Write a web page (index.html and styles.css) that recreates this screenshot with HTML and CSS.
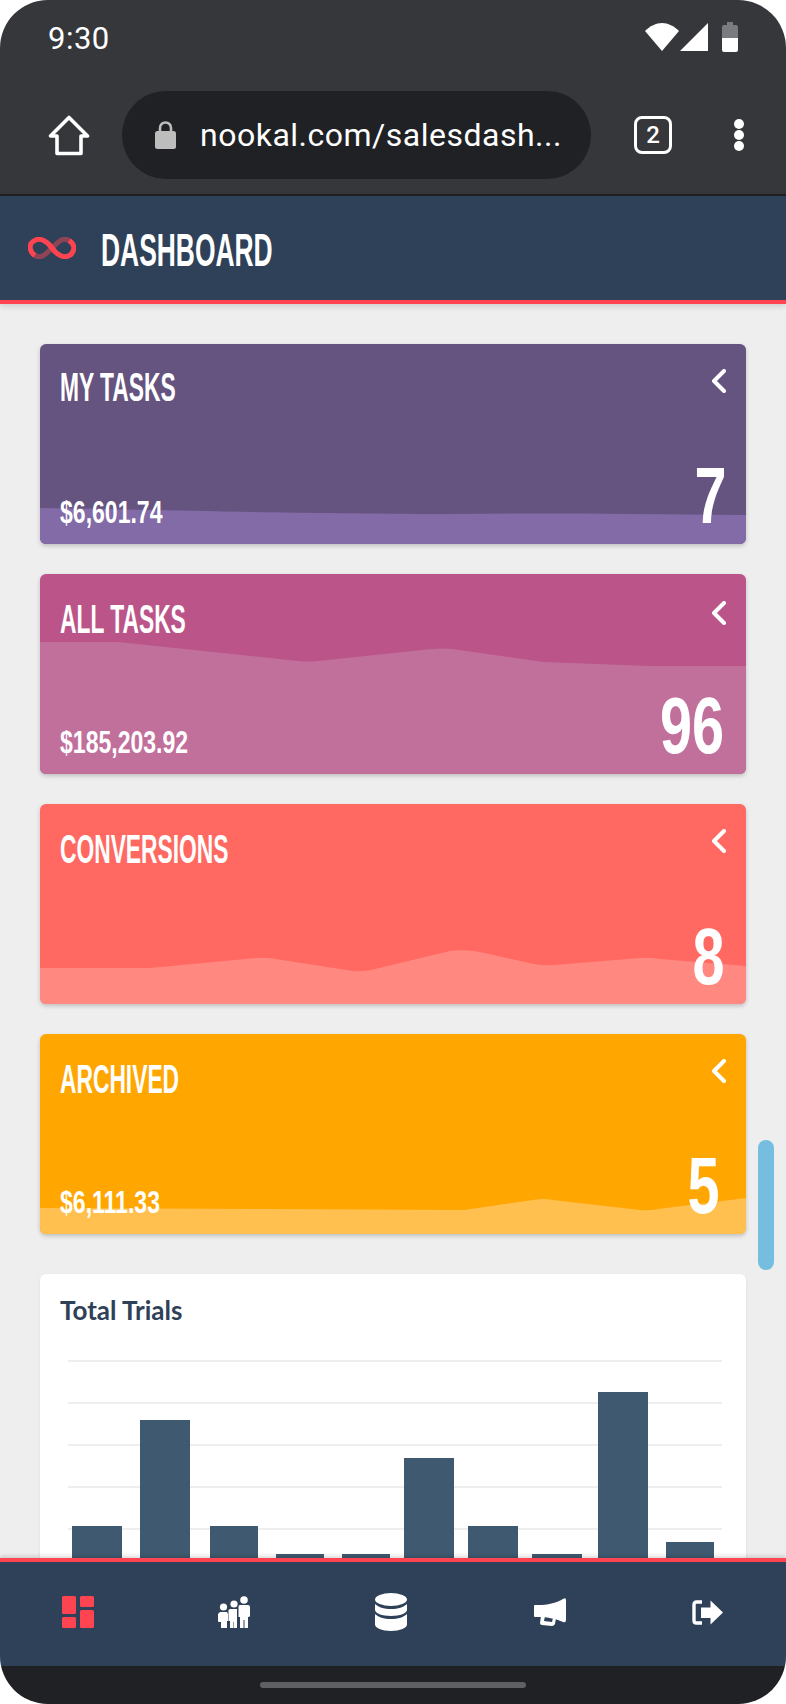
FILE: index.html
```html
<!DOCTYPE html>
<html lang="en">
<head>
    <meta charset="UTF-8">
    <meta name="viewport" content="width=device-width, initial-scale=1.0">
    <title>Dashboard</title>
    <link rel="stylesheet" href="styles.css">
</head>
<body>

<div class="phone">
    <div class="browser">
        <div class="status-bar">
            <span class="clock">9:30</span>
            <div class="status-icons">
                <svg width="34" height="28" viewBox="0 0 34 28"><path d="M0 8 C5 3 11 0 17 0 C23 0 29 3 34 8 L17 28 Z" fill="#fff"/></svg>
                <svg width="28" height="28" viewBox="0 0 28 28"><path d="M28 0 V28 H0 Z" fill="#fff"/></svg>
                <svg class="battery" width="16" height="30" viewBox="0 0 16 30"><path d="M5 0 H11 V3 H14 Q16 3 16 5 V16 H0 V5 Q0 3 2 3 H5 Z" fill="#7a7b7e"/><path d="M0 16 H16 V28 Q16 30 14 30 H2 Q0 30 0 28 Z" fill="#fff"/></svg>
            </div>
        </div>
        <div class="toolbar">
            <svg class="home-icon" width="42" height="41" viewBox="0 0 42 41"><path d="M21 2.5 L39.5 21 H33 V38.5 H9 V21 H2.5 Z" fill="none" stroke="#fff" stroke-width="3.6" stroke-linejoin="round"/></svg>
            <div class="url-pill">
                <svg width="21" height="28" viewBox="0 0 21 28"><path d="M5 12 V7 C5 3.5 7.5 1.5 10.5 1.5 C13.5 1.5 16 3.5 16 7 V12" fill="none" stroke="#bdbdbd" stroke-width="2.6"/><rect y="10" width="21" height="18" rx="2.5" fill="#bdbdbd"/></svg>
                <span class="url-text">nookal.com/salesdash...</span>
            </div>
            <div class="tab-count">2</div>
            <div class="kebab"><i></i><i></i><i></i></div>
        </div>
    </div>

    <header class="app-header">
        <svg width="48" height="22" viewBox="0 0 48 22">
            <path d="M7 18.5 C15 23 20 14 24 11 C28 8 33 -1 41 3.5" fill="none" stroke="#8e4455" stroke-width="5"/>
            <path d="M7 18.5 C1 15 1 7 5 4.5 C12 -1 20 5 24 11 C28 17 36 23 43 17.5 C47 13 47 7 41 3.5" fill="none" stroke="#ff4451" stroke-width="5"/>
        </svg>
        <h1>Dashboard</h1>
    </header>

    <main class="content">
        <section class="stat-card card-purple">
            <svg class="wave" viewBox="0 0 706 200" preserveAspectRatio="none"><path d="M0 164 C100 165 200 169 407 170 C500 169 600 170 706 171 V200 H0 Z"/></svg>
            <div class="card-top first-top">
                <h2>My Tasks</h2>
                <svg class="chevron" width="15" height="24" viewBox="0 0 15 24"><path d="M13 2 L3 12 L13 22" fill="none" stroke="#fff" stroke-width="4" stroke-linecap="round" stroke-linejoin="round"/></svg>
            </div>
            <div class="card-bottom">
                <span class="amount">$6,601.74</span>
                <span class="count count-seven">7</span>
            </div>
        </section>

        <section class="stat-card card-pink">
            <svg class="wave" viewBox="0 0 706 200" preserveAspectRatio="none"><path d="M0 68 H78 L258 87 Q268 88 278 87 L392 75 Q402 74 412 75 L504 88 L610 92 H706 V200 H0 Z"/></svg>
            <div class="card-top">
                <h2>All Tasks</h2>
                <svg class="chevron" width="15" height="24" viewBox="0 0 15 24"><path d="M13 2 L3 12 L13 22" fill="none" stroke="#fff" stroke-width="4" stroke-linecap="round" stroke-linejoin="round"/></svg>
            </div>
            <div class="card-bottom">
                <span class="amount">$185,203.92</span>
                <span class="count">96</span>
            </div>
        </section>

        <section class="stat-card card-coral">
            <svg class="wave" viewBox="0 0 706 200" preserveAspectRatio="none"><path d="M0 164 H110 L216 154 Q226 153 236 155 L313 167 Q323 168 335 165 L410 147 Q425 145 440 148 L494 160 Q504 162 514 161 L600 154 Q610 153 620 155 L706 162 V200 H0 Z"/></svg>
            <div class="card-top">
                <h2>Conversions</h2>
                <svg class="chevron chevron-high" width="15" height="24" viewBox="0 0 15 24"><path d="M13 2 L3 12 L13 22" fill="none" stroke="#fff" stroke-width="4" stroke-linecap="round" stroke-linejoin="round"/></svg>
            </div>
            <div class="card-bottom">
                <span class="count">8</span>
            </div>
        </section>

        <section class="stat-card card-orange">
            <svg class="wave" viewBox="0 0 706 200" preserveAspectRatio="none"><path d="M0 174 L231 175 L424 176 L493 166 Q503 164 513 166 L600 176 Q609 177 618 175 L706 164 V200 H0 Z"/></svg>
            <div class="card-top">
                <h2>Archived</h2>
                <svg class="chevron chevron-high" width="15" height="24" viewBox="0 0 15 24"><path d="M13 2 L3 12 L13 22" fill="none" stroke="#fff" stroke-width="4" stroke-linecap="round" stroke-linejoin="round"/></svg>
            </div>
            <div class="card-bottom">
                <span class="amount">$6,111.33</span>
                <span class="count count-five">5</span>
            </div>
        </section>

        <section class="chart-card">
            <h3>Total Trials</h3>
            <svg class="chart" width="706" height="300" viewBox="0 0 706 300">
                <g fill="#eeeeee">
                    <rect x="28" y="36" width="654" height="2"/>
                    <rect x="28" y="78" width="654" height="2"/>
                    <rect x="28" y="120" width="654" height="2"/>
                    <rect x="28" y="162" width="654" height="2"/>
                    <rect x="28" y="204" width="654" height="2"/>
                </g>
                <g fill="#3f5a70">
                    <rect x="32" y="202" width="50" height="98"/>
                    <rect x="100" y="96" width="50" height="204"/>
                    <rect x="170" y="202" width="48" height="98"/>
                    <rect x="236" y="230" width="48" height="70"/>
                    <rect x="302" y="230" width="48" height="70"/>
                    <rect x="364" y="134" width="50" height="166"/>
                    <rect x="428" y="202" width="50" height="98"/>
                    <rect x="492" y="230" width="50" height="70"/>
                    <rect x="558" y="68" width="50" height="232"/>
                    <rect x="626" y="218" width="48" height="82"/>
                </g>
            </svg>
        </section>
        <div class="scroll-thumb"></div>
    </main>

    <nav class="bottom-nav">
        <svg width="32" height="32" viewBox="0 0 32 32" fill="#ff4451"><rect width="14" height="18" rx="1.5"/><rect x="18" width="14" height="11" rx="1.5"/><rect y="21" width="14" height="11" rx="1.5"/><rect x="18" y="14" width="14" height="18" rx="1.5"/></svg>
        <svg width="32" height="32" viewBox="0 0 32 32" fill="#fff">
            <circle cx="5.5" cy="11" r="3.6"/><circle cx="16" cy="8" r="3.6"/><circle cx="26" cy="4" r="3.8"/>
            <path d="M2 16 H9 L10 18 V25 H9 V32 H3 V26 H1 Q0 26 0 25 V18 Z"/>
            <path d="M12 13 H19 V32 H16 V26 H15.5 V32 H12 V25 H10.5 V14 Z"/>
            <path d="M22 9 H30 Q32 9 32 11 V20 Q32 21 30 21 V32 H26.5 V24 H25.5 V32 H22 V21 H20.5 V11 Q20.5 9 22 9 Z"/>
        </svg>
        <svg width="32" height="38" viewBox="0 0 32 38" fill="#fff">
            <ellipse cx="16" cy="6.5" rx="16" ry="6.5"/>
            <path d="M0 11 C3 14 9 16 16 16 C23 16 29 14 32 11 V17 C32 20 25 23 16 23 C7 23 0 20 0 17 Z"/>
            <path d="M0 21 C3 24 9 26 16 26 C23 26 29 24 32 21 V31.5 C32 35 25 38 16 38 C7 38 0 35 0 31.5 Z"/>
        </svg>
        <svg width="32" height="28" viewBox="0 0 32 28" fill="#fff">
            <path d="M0 8 Q0 7 1 7 H5 C13 7 22 5 29 1 Q32 -1 32 2 V22 Q32 25 29 24 C23 21 13 19 5 19 H1 Q0 19 0 18 Z"/>
            <path d="M7 18 L6 25 Q6 27 8 27 L18 28 Q20 28 21 26 L22 20 L19 20 L18 24 L10 23 L11 18 Z"/>
        </svg>
        <svg width="31" height="25" viewBox="0 0 31 25">
            <path d="M10 2 H4.5 Q2 2 2 4.5 V20.5 Q2 23 4.5 23 H10" fill="none" stroke="#fff" stroke-width="3.4"/>
            <path d="M9 7.5 H18.5 V0.5 L31 12.5 L18.5 24.5 V18 H9 Z" fill="#fff"/>
        </svg>
    </nav>
    <div class="gesture-bar"><span class="gesture-pill"></span></div>
</div>

</body>
</html>
```

FILE: styles.css
```css
* {
    box-sizing: border-box;
}
body {
    margin: 0;
    background: white;
    font-family: "Liberation Sans", sans-serif;
}
.phone {
    position: relative;
    display: flex;
    flex-direction: column;
    width: 786px;
    height: 1704px;
    border-radius: 48px;
    overflow: hidden;
    background: #eeeeee;
}

/* browser chrome */
.browser {
    background: #36373b;
    border-bottom: 2px solid #202124;
}
.status-bar {
    display: flex;
    justify-content: space-between;
    align-items: center;
    height: 74px;
    padding: 0 48px;
    color: white;
}
.clock {
    padding-top: 2px;
    font-family: Roboto, sans-serif;
    font-size: 31px;
    letter-spacing: 0.5px;
}
.status-icons {
    display: flex;
    align-items: center;
    gap: 1px;
}
.battery {
    margin-left: 13px;
}
.toolbar {
    display: flex;
    align-items: center;
    padding: 17px 0 15px 48px;
}
.url-pill {
    display: flex;
    align-items: center;
    gap: 24px;
    width: 469px;
    height: 88px;
    margin-left: 32px;
    padding-left: 33px;
    border-radius: 44px;
    background: #202124;
}
.url-text {
    font-family: Roboto, sans-serif;
    font-size: 32px;
    letter-spacing: 0.5px;
    color: white;
    white-space: nowrap;
}
.tab-count {
    width: 38px;
    height: 38px;
    margin-left: 43px;
    border: 3px solid white;
    border-radius: 8px;
    font-family: Roboto, sans-serif;
    font-size: 24px;
    font-weight: 500;
    line-height: 32px;
    text-align: center;
    color: white;
}
.kebab {
    display: flex;
    flex-direction: column;
    gap: 1px;
    margin-left: 62px;
}
.kebab i {
    width: 10px;
    height: 10px;
    border-radius: 50%;
    background: white;
}

/* app header */
.app-header {
    position: relative;
    z-index: 2;
    display: flex;
    align-items: center;
    gap: 25px;
    height: 108px;
    padding-left: 28px;
    background: #2f4158;
    border-bottom: 4px solid #ff4451;
    box-shadow: 0 2px 6px rgba(0, 0, 0, 0.15);
}
/* no condensed family is installed, so headings are squeezed */
.app-header h1 {
    margin: 4px 0 0;
    font-size: 46px;
    font-weight: 700;
    text-transform: uppercase;
    color: white;
    transform: scaleX(0.574);
    transform-origin: left;
}

/* page content */
.content {
    position: relative;
    flex: 1;
    min-height: 0;
    overflow: hidden;
    display: flex;
    flex-direction: column;
    gap: 30px;
    padding: 40px 40px 0;
}
.stat-card {
    position: relative;
    flex: none;
    display: flex;
    flex-direction: column;
    justify-content: space-between;
    height: 200px;
    padding: 0 20px;
    border-radius: 6px;
    overflow: hidden;
    color: white;
    box-shadow: 0 2px 4px rgba(0, 0, 0, 0.2);
}
.card-purple { background: #655380; fill: #826ba6; }
.card-pink { background: #bb5488; fill: #c1709c; }
.card-coral { background: #ff6961; fill: #ff8880; }
.card-orange { background: #ffa600; fill: #ffc04f; }
.wave {
    position: absolute;
    left: 0;
    top: 0;
    width: 100%;
    height: 100%;
}
.card-top,
.card-bottom {
    position: relative;
    display: flex;
    justify-content: space-between;
}
.card-top {
    margin-top: 23px;
}
.first-top {
    margin-top: 21px;
}
.card-top h2 {
    margin: 0;
    font-size: 40px;
    font-weight: 700;
    line-height: 44px;
    text-transform: uppercase;
    transform: scaleX(0.57);
    transform-origin: left;
}
.chevron {
    margin-top: 4px;
}
.chevron-high {
    margin-top: 2px;
}
.card-bottom {
    align-items: baseline;
    margin-bottom: 17px;
}
.amount {
    font-size: 32px;
    font-weight: 700;
    line-height: 30px;
    transform: scaleX(0.72);
    transform-origin: left;
}
.count {
    margin-left: auto;
    margin-right: 2px;
    font-size: 80px;
    font-weight: 700;
    line-height: 60px;
    transform: scaleX(0.72);
    transform-origin: right;
}
.count-seven {
    margin-right: 0;
}
.count-five {
    margin-right: 7px;
}
.chart-card {
    flex: none;
    height: 340px;
    margin-top: 10px;
    padding-top: 22px;
    background: white;
    border-radius: 6px;
    box-shadow: 0 1px 3px rgba(0, 0, 0, 0.08);
}
.chart-card h3 {
    margin: 0;
    padding-left: 20px;
    font-family: Lato, sans-serif;
    font-size: 26px;
    font-weight: 700;
    line-height: 28px;
    color: #2f4158;
}
.chart {
    display: block;
}
.scroll-thumb {
    position: absolute;
    left: 758px;
    top: 836px;
    width: 16px;
    height: 130px;
    border-radius: 8px;
    background: #75bee0;
}

/* bottom bar */
.bottom-nav {
    position: relative;
    z-index: 2;
    display: grid;
    grid-template-columns: 156px 156px 158px 159px 157px;
    justify-items: center;
    align-items: center;
    flex: none;
    height: 108px;
    padding-bottom: 4px;
    background: #2f4158;
    border-top: 4px solid #ff4451;
    box-shadow: 0 -2px 4px rgba(0, 0, 0, 0.15);
}
.gesture-bar {
    display: flex;
    justify-content: center;
    flex: none;
    height: 38px;
    padding-top: 16px;
    background: #202124;
}
.gesture-pill {
    width: 266px;
    height: 6px;
    border-radius: 3px;
    background: #5f6063;
}
```
